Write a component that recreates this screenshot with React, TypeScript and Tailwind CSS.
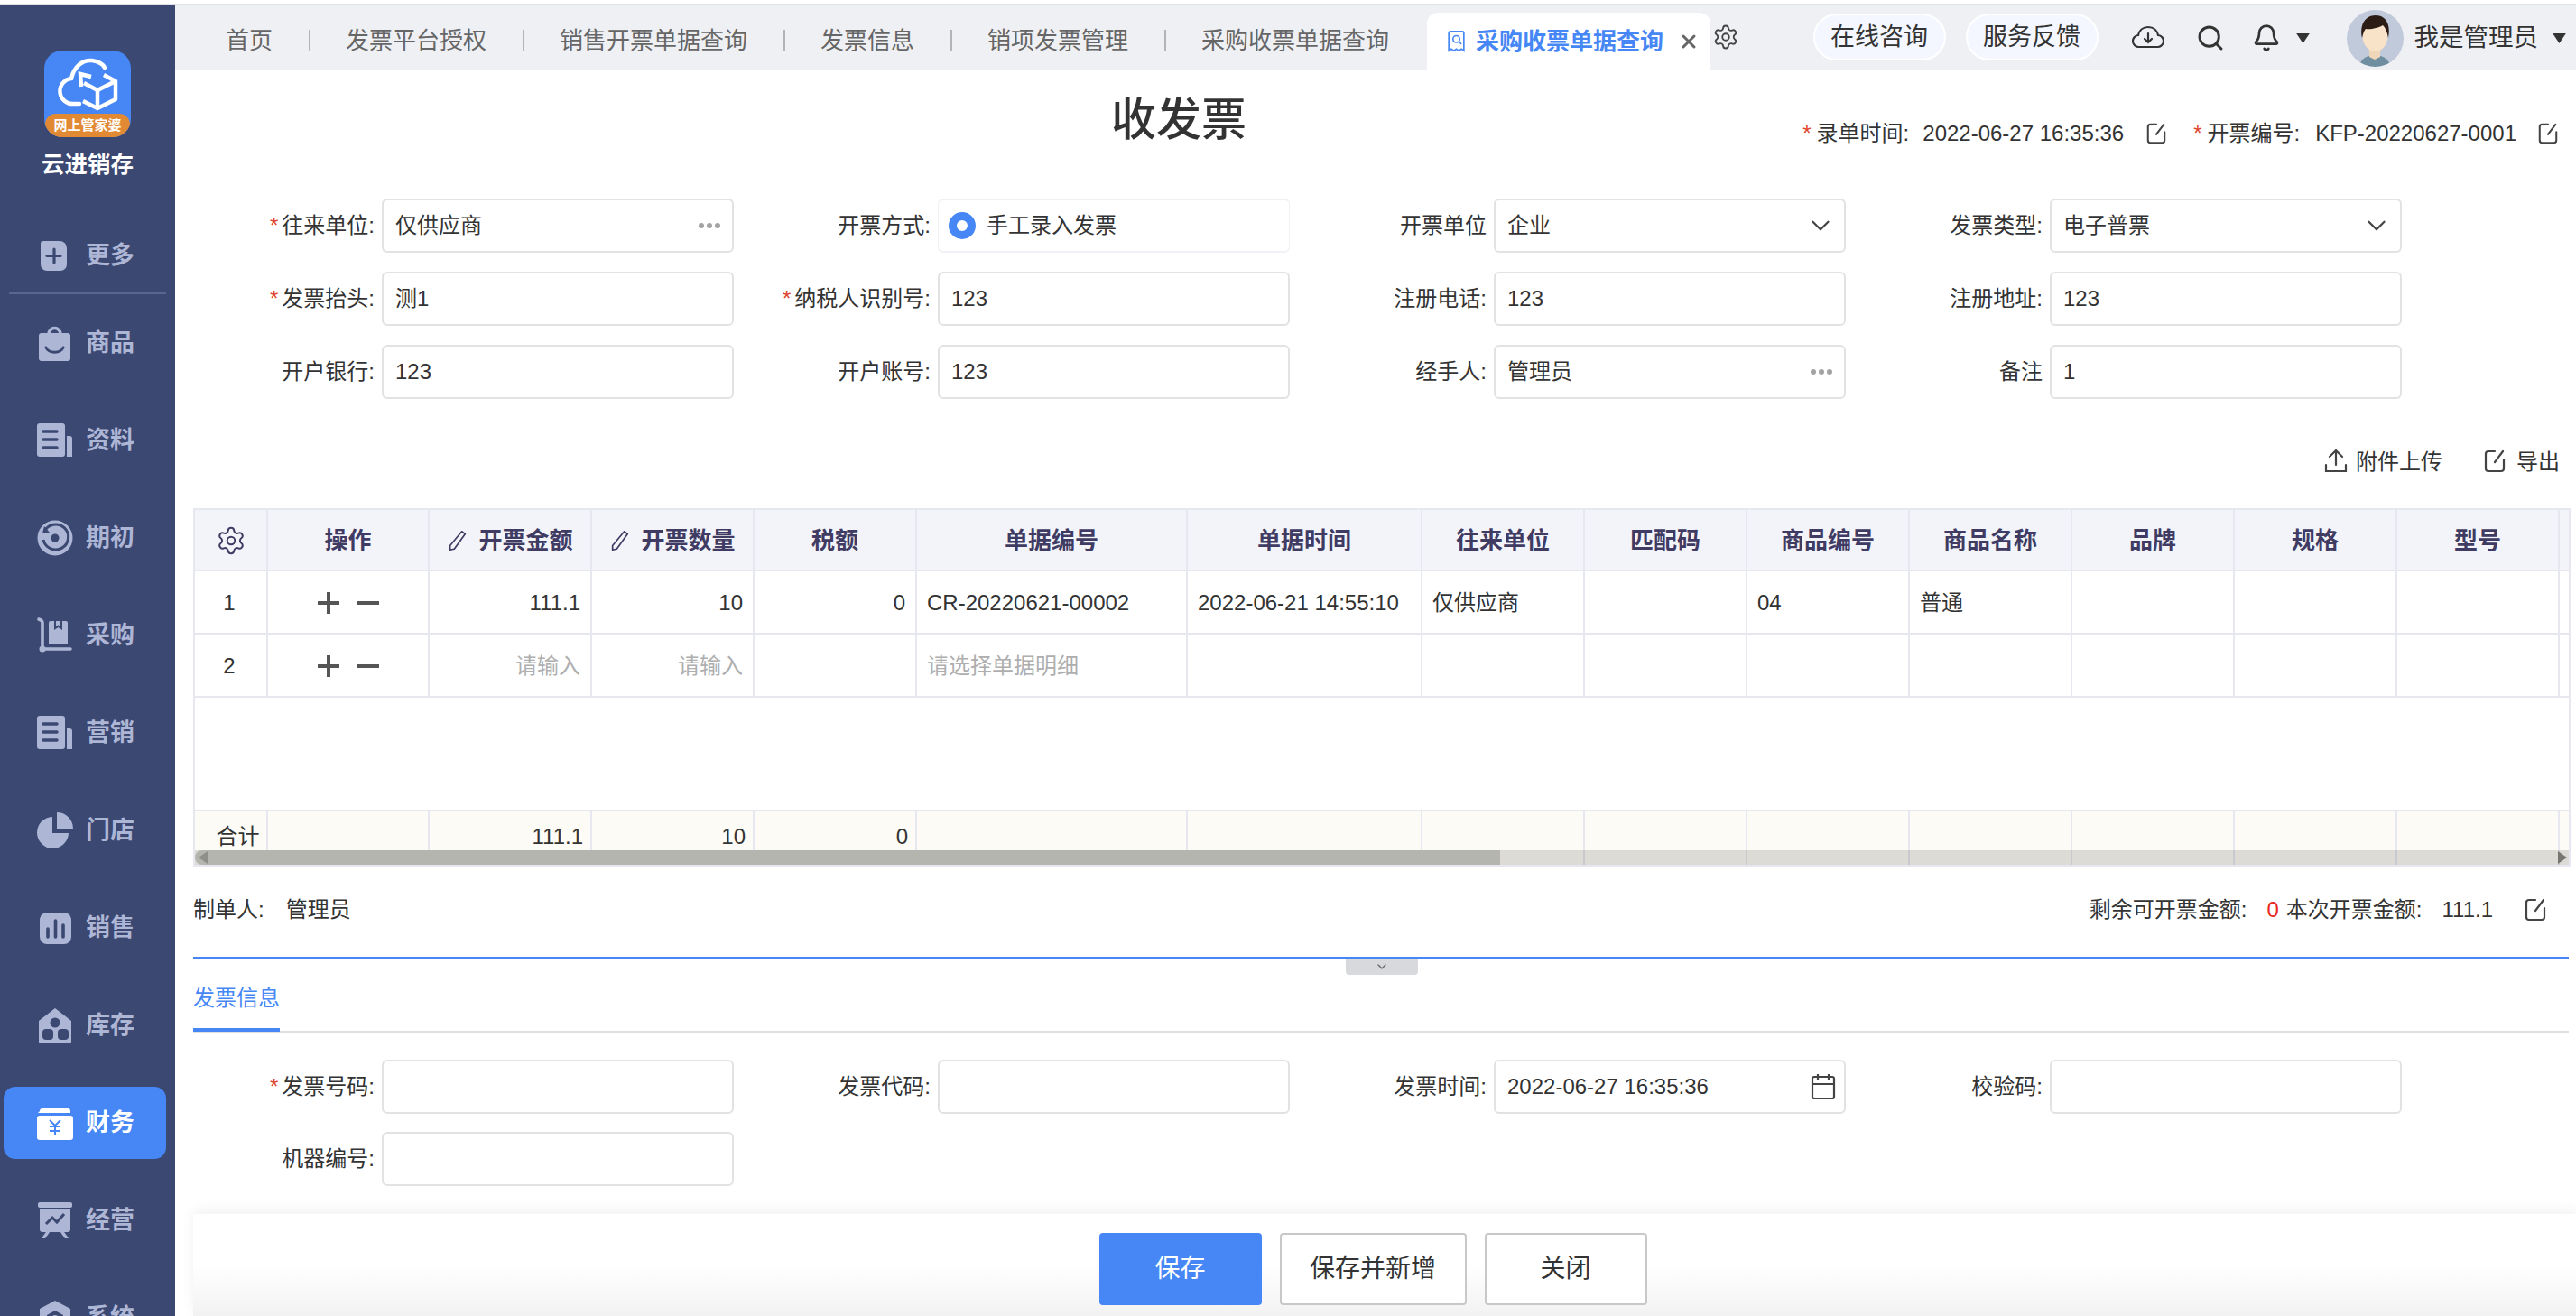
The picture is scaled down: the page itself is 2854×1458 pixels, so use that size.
import React from 'react';
import { Bell, ChevronDown, Search, Settings, X } from 'lucide-react';

const font = 'font-["Liberation_Sans","Noto_Sans_CJK_SC",sans-serif]';

const EditIcon = ({ className = 'w-[26px] h-[28px]' }: { className?: string }) => (
  <svg viewBox="0 0 26 28" fill="none" stroke="#444" strokeWidth="2.2" strokeLinecap="round" className={className}>
    <path d="M13 3H6a3 3 0 0 0-3 3v16a3 3 0 0 0 3 3h14a3 3 0 0 0 3-3V12" />
    <path d="M22 3 13 15" />
  </svg>
);

const PenIcon = () => (
  <svg viewBox="0 0 24 28" fill="none" stroke="#3f3b63" strokeWidth="1.8" strokeLinejoin="round" className="w-[24px] h-[26px]">
    <path d="M17 3l4 3L8 24l-5 1 0-5z" />
  </svg>
);

const Dots = () => (
  <span className="ml-auto flex gap-[3px]">
    <i className="w-[6px] h-[6px] rounded-full bg-[#a3a3a3]" />
    <i className="w-[6px] h-[6px] rounded-full bg-[#a3a3a3]" />
    <i className="w-[6px] h-[6px] rounded-full bg-[#a3a3a3]" />
  </span>
);

const docIcon = (
  <>
    <rect x="0" y="1" width="31" height="37" rx="3" fill="#aeb6d6" />
    <path d="M33 15h3a3 3 0 0 1 3 3v20h-6z" fill="#aeb6d6" />
    <path d="M7 10h15M7 19h15M7 28h15" stroke="#3b4872" strokeWidth="3.4" strokeLinecap="round" />
  </>
);

const navIcons: Record<string, React.ReactNode> = {
  更多: (
    <>
      <path d="M11 4h14a8 8 0 0 1 8 8v18a7 7 0 0 1-7 7H11a7 7 0 0 1-7-7V7a3 3 0 0 1 3-3z" fill="#aeb6d6" />
      <path d="M19 13v15M11 20.5h15" stroke="#3b4872" strokeWidth="3.2" strokeLinecap="round" />
    </>
  ),
  商品: (
    <>
      <path d="M13 10a6.5 6.5 0 0 1 13 0" stroke="#aeb6d6" strokeWidth="3.5" fill="none" />
      <rect x="2" y="9" width="35" height="31" rx="3" fill="#aeb6d6" />
      <path d="M10 25c3 7 16 7 19 0" stroke="#3b4872" strokeWidth="3" fill="none" strokeLinecap="round" />
    </>
  ),
  资料: docIcon,
  营销: docIcon,
  期初: (
    <>
      <circle cx="20" cy="20" r="19.5" fill="#aeb6d6" />
      <path d="M8 13a14 14 0 1 1-1 9" stroke="#3b4872" strokeWidth="3" fill="none" />
      <path d="M8 7l6 7-8 1z" fill="#3b4872" />
      <circle cx="20" cy="20" r="4.5" fill="#3b4872" />
    </>
  ),
  采购: (
    <>
      <path d="M2 2c3 1 4 2 4 4v27M7 35h30" stroke="#aeb6d6" strokeWidth="3.6" fill="none" strokeLinecap="round" />
      <circle cx="6" cy="35" r="3.5" fill="#aeb6d6" />
      <path d="M13 6a2 2 0 0 1 2-2h17a2 2 0 0 1 2 2v24H13z" fill="#aeb6d6" />
      <path d="M19 4v10l4.500-3 4.500 3V4z" fill="#3b4872" />
      <path d="M21 4v6l2.500-1.500 2.500 1.500V4z" fill="#aeb6d6" />
    </>
  ),
  门店: (
    <>
      <path d="M17 5a17.500 17.500 0 1 0 18 18H17z" fill="#aeb6d6" />
      <path d="M22 0a18 18 0 0 1 18 18H22z" fill="#aeb6d6" />
    </>
  ),
  销售: (
    <>
      <rect x="3" y="3" width="35" height="35" rx="8" fill="#aeb6d6" />
      <path d="M12 21v9M20.500 12v18M29 17v13" stroke="#3b4872" strokeWidth="3.6" strokeLinecap="round" />
    </>
  ),
  库存: (
    <>
      <path d="M2 15 20 1l18 14v23a2 2 0 0 1-2 2H4a2 2 0 0 1-2-2z" fill="#aeb6d6" />
      <circle cx="20" cy="17" r="5.500" fill="#3b4872" />
      <rect x="6" y="24" width="12" height="12" rx="4" fill="#3b4872" />
      <rect x="23" y="24" width="12" height="12" rx="4" fill="#3b4872" />
    </>
  ),
  财务: (
    <>
      <path d="M3 7a3 3 0 0 1 3-3h28a3 3 0 0 1 3 3v2H1z" fill="#fff" />
      <rect x="0" y="12" width="40" height="27" rx="3" fill="#fff" />
      <path d="M14 17l6 6 6-6M14 24h12M14 29h12M20 23v11" stroke="#4687f5" strokeWidth="2" fill="none" />
    </>
  ),
  经营: (
    <>
      <rect x="1" y="0" width="38" height="6" rx="2" fill="#aeb6d6" />
      <path d="M3 8h34v22a3 3 0 0 1-3 3H6a3 3 0 0 1-3-3z" fill="#aeb6d6" />
      <path d="M10 24l7-7 5 5 8-9" stroke="#3b4872" strokeWidth="3" fill="none" />
      <path d="M12 33l-5 7M28 33l5 7" stroke="#aeb6d6" strokeWidth="3.500" strokeLinecap="round" />
    </>
  ),
  系统: (
    <>
      <path d="M20 1l17 9v20L20 40 3 30V10z" fill="#aeb6d6" />
      <path d="M20 12l9 5v9l-9 5-9-5v-9z" fill="#3b4872" />
      <circle cx="20" cy="21" r="4" fill="#aeb6d6" />
    </>
  ),
};

const NavItem = ({ name, active }: { name: string; active?: boolean }) => (
  <div className={`w-[180px] h-[80px] shrink-0 ml-[4px] rounded-[13px] flex items-center pl-[37px] gap-[14px] ${active ? 'bg-[#4687f5] text-white' : 'text-[#aeb6d6]'}`}>
    <svg viewBox="0 0 40 40" className="w-[40px] h-[40px] shrink-0">
      {navIcons[name]}
    </svg>
    <span className="text-[27px] font-bold leading-none">{name}</span>
  </div>
);

const Sidebar = () => (
  <aside className="w-[194px] shrink-0 bg-[#3b4872] flex flex-col">
    <div className="h-[237px] shrink-0 pt-[50px] flex flex-col items-center">
      <div className="w-[96px] h-[96px] rounded-[20px] bg-[#4687f5] relative overflow-hidden">
        <svg viewBox="0 0 96 96" className="w-[96px] h-[96px]" fill="none" stroke="#fff" strokeWidth="4.500">
          <path d="M39 59H33a14 14 0 0 1-3-28c3-13 12-21 23-20 7 1 12 4 14 8" strokeLinecap="round" />
          <path d="M66 27 79 34v20L59 64 43 56" strokeLinejoin="round" />
          <path d="M59 64V44l20-10M59 44 44 36" />
          <path d="M41 40l-1-14 12 3" />
        </svg>
        <div className="absolute left-[1px] right-[1px] bottom-0 h-[26px] rounded-t-[18px] rounded-b-[22px] bg-[#e18a33] text-white text-[15px] font-bold leading-[26px] text-center whitespace-nowrap">
          网上管家婆
        </div>
      </div>
      <div className="mt-[15px] text-white text-[25.500px] font-bold leading-[30px]">云进销存</div>
    </div>
    <NavItem name="更多" />
    <div className="h-[2px] mx-[10px] shrink-0 bg-[#5b668d] mt-[1px] mb-[14px]" />
    <div className="flex flex-col gap-[28px]">
      {['商品', '资料', '期初', '采购', '营销', '门店', '销售', '库存'].map((n) => (
        <NavItem key={n} name={n} />
      ))}
      <NavItem name="财务" active />
      <NavItem name="经营" />
      <NavItem name="系统" />
    </div>
  </aside>
);

const tabs = ['首页', '发票平台授权', '销售开票单据查询', '发票信息', '销项发票管理', '采购收票单据查询'];

const TabBar = () => (
  <div className="h-[72px] shrink-0 bg-[#eff0f4] flex items-end pl-[56px] pr-[11px]">
    <div className="h-[72px] flex items-center gap-[39.500px] pt-[6px] text-[26px] text-[#666]">
      {tabs.map((t, i) => (
        <React.Fragment key={t}>
          {i > 0 && <i className="w-[2px] h-[24px] bg-[#b4b4b8]" />}
          <span className="whitespace-nowrap">{t}</span>
        </React.Fragment>
      ))}
    </div>
    <div className="ml-[42px] h-[64px] w-[314px] bg-white rounded-t-[12px] flex items-center pl-[21px] text-[#4687f5]">
      <svg viewBox="0 0 24 28" fill="none" stroke="#4687f5" strokeWidth="1.800" className="w-[23px] h-[26px] shrink-0">
        <path d="M3 4a2 2 0 0 1 2-2h14a2 2 0 0 1 2 2v21l-3-2-3 2-3-2-3 2-3-2-3 2z" />
        <circle cx="12" cy="11" r="4" />
        <path d="M15 14l3 3" />
      </svg>
      <span className="ml-[10px] text-[26px] font-bold whitespace-nowrap">采购收票单据查询</span>
      <X className="ml-[16px] text-[#666]" size={24} strokeWidth={3} />
    </div>
    <div className="h-[72px] flex items-center ml-[2px] pb-[3px]">
      <Settings size={30} strokeWidth={1.500} className="text-[#444]" />
    </div>
    <div className="ml-auto h-[72px] flex items-center text-[#333]">
      <div className="h-[52px] w-[147px] rounded-full bg-[#f4f7ff] border-2 border-white text-[27px] flex items-center justify-center mb-[3px] pt-[2px]">在线咨询</div>
      <div className="ml-[22px] h-[52px] w-[147px] rounded-full bg-[#f4f7ff] border-2 border-white text-[27px] flex items-center justify-center mb-[3px] pt-[2px]">服务反馈</div>
      <svg viewBox="0 0 36 28" fill="none" stroke="#333" strokeWidth="2.200" strokeLinecap="round" className="ml-[37px] w-[36px] h-[28px]">
        <path d="M10 24H8a6.500 6.500 0 0 1-1-13C8 6 12 2 18 2c6 0 10 4 11 9a6.500 6.500 0 0 1-1 13H10" />
        <path d="M18 9v10M14 15l4 4 4-4" />
      </svg>
      <Search size={32} strokeWidth={2.200} className="ml-[35px] text-[#333]" />
      <Bell size={32} strokeWidth={2} className="ml-[30px] text-[#333]" />
      <svg viewBox="0 0 16 12" className="ml-[17px] w-[15px] h-[11px]"><path d="M0 0h16L8 12z" fill="#333" /></svg>
      <div className="ml-[41px] w-[63px] h-[63px] rounded-full bg-[#c0cadb] overflow-hidden shrink-0">
        <svg viewBox="0 0 63 63" className="w-[63px] h-[63px]">
          <path d="M14 63c1-10 10-13 17-13s16 3 17 13z" fill="#6f8e9f" />
          <path d="M25 42h12v10l-6 3-6-3z" fill="#f0d6b9" />
          <ellipse cx="31.500" cy="29" rx="14" ry="17" fill="#f8e2c8" />
          <path d="M17 31c-3-14 3-25 15-25s17 11 14 25c-1-6-3-11-6-14-5 3-14 5-19 4-2 2-3 6-4 10z" fill="#2b1d16" />
        </svg>
      </div>
      <span className="ml-[12px] text-[27.500px] whitespace-nowrap">我是管理员</span>
      <svg viewBox="0 0 16 12" className="ml-[16px] w-[15px] h-[11px]"><path d="M0 0h16L8 12z" fill="#333" /></svg>
    </div>
  </div>
);

const Field = ({ label, required, children, plain }: { label: string; required?: boolean; children?: React.ReactNode; plain?: boolean }) => (
  <div className="flex items-center h-[60px]">
    <label className="w-[218px] shrink-0 text-right text-[24px] text-[#333] pr-[8px] whitespace-nowrap">
      {required && <span className="text-[#e0452c] mr-[4px]">*</span>}
      {label}
    </label>
    <div className={`w-[390px] h-[60px] rounded-[6px] flex items-center px-[13px] text-[24px] text-[#333] ${plain ? 'border-y-2 border-x border-[#f0f1f5]' : 'border-2 border-[#e2e2e2]'}`}>
      {children}
    </div>
  </div>
);

const Chevron = () => <ChevronDown size={34} strokeWidth={1.600} className="ml-auto -mr-[4px] text-[#444]" />;

const HeadForm = () => (
  <div className="grid grid-cols-[616px_616px_616px_616px] gap-y-[21px] pl-[11px]">
    <Field label="往来单位:" required>仅供应商<Dots /></Field>
    <Field label="开票方式:" plain>
      <span className="-ml-[2px] w-[30px] h-[30px] rounded-full border-[9px] border-[#4687f5] shrink-0" />
      <span className="ml-[12px]">手工录入发票</span>
    </Field>
    <Field label="开票单位">企业<Chevron /></Field>
    <Field label="发票类型:">电子普票<Chevron /></Field>
    <Field label="发票抬头:" required>测1</Field>
    <Field label="纳税人识别号:" required>123</Field>
    <Field label="注册电话:">123</Field>
    <Field label="注册地址:">123</Field>
    <Field label="开户银行:">123</Field>
    <Field label="开户账号:">123</Field>
    <Field label="经手人:">管理员<Dots /></Field>
    <Field label="备注">1</Field>
  </div>
);

const cols = 'grid grid-cols-[81px_179px_180px_180px_180px_300px_260px_180px_180px_180px_180px_180px_180px_180px_1fr]';
const heads = ['单据编号', '单据时间', '往来单位', '匹配码', '商品编号', '商品名称', '品牌', '规格', '型号'];

const Cell = ({ children, className = '' }: { children?: React.ReactNode; className?: string }) => (
  <div className={`border-r-2 border-[#e6e7ef] flex items-center px-[11px] whitespace-nowrap ${className}`}>{children}</div>
);

const OpIcons = () => (
  <svg viewBox="0 0 70 26" className="w-[70px] h-[26px]" fill="#555">
    <rect x="11" y="1" width="4" height="24" />
    <rect x="1" y="11" width="24" height="4" />
    <rect x="45" y="11" width="24" height="4" />
  </svg>
);

const DataRow = ({ n, vals }: { n: string; vals: string[] }) => (
  <div className={`${cols} h-[70px] border-b-2 border-[#e6e7ef] text-[24px] text-[#333] [&>div]:pt-[2px]`}>
    <Cell className="justify-center pl-[8px]">{n}</Cell>
    <Cell className="justify-center"><OpIcons /></Cell>
    {vals.map((v, i) => (
      <Cell key={i} className={`${i < 3 ? 'justify-end' : ''} ${v.startsWith('请') ? 'text-[#aeaeae]' : ''}`}>{v}</Cell>
    ))}
    <div />
  </div>
);

const DataTable = () => (
  <div className="relative ml-[20px] mr-[6px] border-x-2 border-y-2 border-[#e6e7ef] text-[#333]">
    <div className={`${cols} h-[68px] bg-[#f3f3fa] border-b-2 border-[#e6e7ef] text-[26px] font-semibold text-[#3f3b63] [&>div]:pt-[2px]`}>
      <Cell className="justify-center"><Settings size={34} strokeWidth={1.400} /></Cell>
      <Cell className="justify-center">操作</Cell>
      <Cell className="justify-center gap-[11px]"><PenIcon />开票金额</Cell>
      <Cell className="justify-center gap-[11px]"><PenIcon />开票数量</Cell>
      <Cell className="justify-center">税额</Cell>
      {heads.map((h) => (
        <Cell key={h} className="justify-center">{h}</Cell>
      ))}
      <div />
    </div>
    <DataRow n="1" vals={['111.1', '10', '0', 'CR-20220621-00002', '2022-06-21 14:55:10', '仅供应商', '', '04', '普通', '', '', '']} />
    <DataRow n="2" vals={['请输入', '请输入', '', '请选择单据明细', '', '', '', '', '', '', '', '']} />
    <div className="h-[126px] border-b-2 border-[#e6e7ef]" />
    <div className={`${cols} h-[59px] bg-[#fdfbf5] text-[24px] text-[#333]`}>
      <Cell className="justify-center items-start pt-[10px] pl-[16px] pr-0">合计</Cell>
      <Cell />
      <Cell className="justify-end items-start pt-[10px] pr-[8px]">111.1</Cell>
      <Cell className="justify-end items-start pt-[10px] pr-[8px]">10</Cell>
      <Cell className="justify-end items-start pt-[10px] pr-[8px]">0</Cell>
      {Array.from({ length: 9 }).map((_, i) => (
        <Cell key={i} />
      ))}
      <div />
    </div>
    {/* scrollbar lies over the total row */}
    <div className="absolute left-0 right-0 bottom-0 h-[16px] bg-[#27271f26] flex items-center">
      <div className="w-[1446px] h-[16px] bg-[#b5b5b0] rounded-l-[8px] flex items-center pl-[2px]">
        <svg viewBox="0 0 14 16" className="w-[14px] h-[16px]"><path d="M12 1v14L2 8z" fill="#8e8e8a" /></svg>
      </div>
      <svg viewBox="0 0 14 16" className="ml-auto w-[14px] h-[16px]"><path d="M2 1v14l10-7z" fill="#77776f" /></svg>
    </div>
  </div>
);

const App = () => (
  <div className={`w-[2854px] h-[1458px] overflow-hidden bg-white ${font}`}>
    <div className="h-[4px] bg-white" />
    <div className="h-[2px] bg-[#dfe0e4]" />
    <div className="flex h-[1452px]">
      <Sidebar />
      <main className="flex-1 min-w-0 flex flex-col">
        <TabBar />
        <div className="h-[142px] shrink-0 flex items-start pr-[19px]">
          <h1 className="ml-[1037px] mt-[25px] text-[50px] leading-[60px] font-medium text-[#333] whitespace-nowrap">收发票</h1>
          <div className="ml-auto mt-[55px] flex items-center text-[24px] leading-[30px] text-[#333] whitespace-nowrap">
            <span className="text-[#e0452c] mr-[6px]">*</span>录单时间:<span className="ml-[15px]">2022-06-27 16:35:36</span>
            <EditIcon className="ml-[24px] w-[24px] h-[28px]" />
            <span className="ml-[29px] text-[#e0452c] mr-[6px]">*</span>开票编号:<span className="ml-[17px]">KFP-20220627-0001</span>
            <EditIcon className="ml-[23px] w-[24px] h-[28px]" />
          </div>
        </div>
        <HeadForm />
        <div className="h-[121px] shrink-0 flex justify-end items-start pt-[55px] pr-[18px] text-[24px] leading-[30px] text-[#333]">
          <svg viewBox="0 0 26 28" fill="none" stroke="#444" strokeWidth="2.200" strokeLinecap="round" className="w-[26px] h-[28px]">
            <path d="M13 18V2M6 9l7-7 7 7M2 18v7h22v-7" />
          </svg>
          <span className="ml-[9px]">附件上传</span>
          <EditIcon className="ml-[44px] w-[28px] h-[28px]" />
          <span className="ml-[10px]">导出</span>
        </div>
        <DataTable />
        <div className="h-[100px] shrink-0 flex items-center pl-[20px] pr-[32px] pb-[4px] text-[24px] text-[#333] whitespace-nowrap">
          制单人:<span className="ml-[24px]">管理员</span>
          <span className="ml-auto">剩余可开票金额:</span>
          <span className="ml-[22px] text-[#e8281c]">0</span>
          <span className="ml-[8px]">本次开票金额:</span>
          <span className="ml-[22px]">111.1</span>
          <EditIcon className="ml-[34px] w-[26px] h-[28px]" />
        </div>
        <div className="relative h-[2px] shrink-0 ml-[20px] mr-[8px] bg-[#4687f5]">
          {/* collapse handle hangs under the divider */}
          <div className="absolute left-[1277px] top-[2px] w-[80px] h-[18px] bg-[#d8d9dc] rounded-b-[4px] flex items-center justify-center">
            <ChevronDown size={16} strokeWidth={2} className="text-[#666]" />
          </div>
        </div>
        <div className="h-[82px] shrink-0 ml-[20px] mr-[8px] flex items-end border-b-2 border-[#e0e0e0]">
          <div className="w-[96px] h-[62px] -mb-[1px] border-b-4 border-[#4687f5] text-[24px] leading-[50px] text-[#4687f5] whitespace-nowrap">发票信息</div>
        </div>
        <div className="mt-[30px] grid grid-cols-[616px_616px_616px_616px] gap-y-[20px] pl-[11px]">
          <Field label="发票号码:" required />
          <Field label="发票代码:" />
          <Field label="发票时间:">
            2022-06-27 16:35:36
            <svg viewBox="0 0 28 30" fill="none" stroke="#444" strokeWidth="2.200" className="ml-auto -mr-[4px] w-[28px] h-[30px]">
              <rect x="2" y="4" width="24" height="24" rx="2" />
              <path d="M2 12h24M8 1v6M20 1v6" />
            </svg>
          </Field>
          <Field label="校验码:" />
          <Field label="机器编号:" />
        </div>
        <div className="mt-[31px] ml-[20px] h-[113px] shrink-0 flex justify-center gap-[20px] pt-[21px] pr-[26px] bg-gradient-to-b from-white via-white to-[#f2f2f2] shadow-[0_-4px_14px_rgba(0,0,0,0.06)] text-[28px]">
          <button className="w-[180px] h-[80px] rounded-[4px] bg-[#4687f5] text-white">保存</button>
          <button className="w-[207px] h-[80px] rounded-[4px] border-2 border-[#c8c8c8] bg-white text-[#333]">保存并新增</button>
          <button className="w-[180px] h-[80px] rounded-[4px] border-2 border-[#c8c8c8] bg-white text-[#333]">关闭</button>
        </div>
      </main>
    </div>
  </div>
);

export default App;
